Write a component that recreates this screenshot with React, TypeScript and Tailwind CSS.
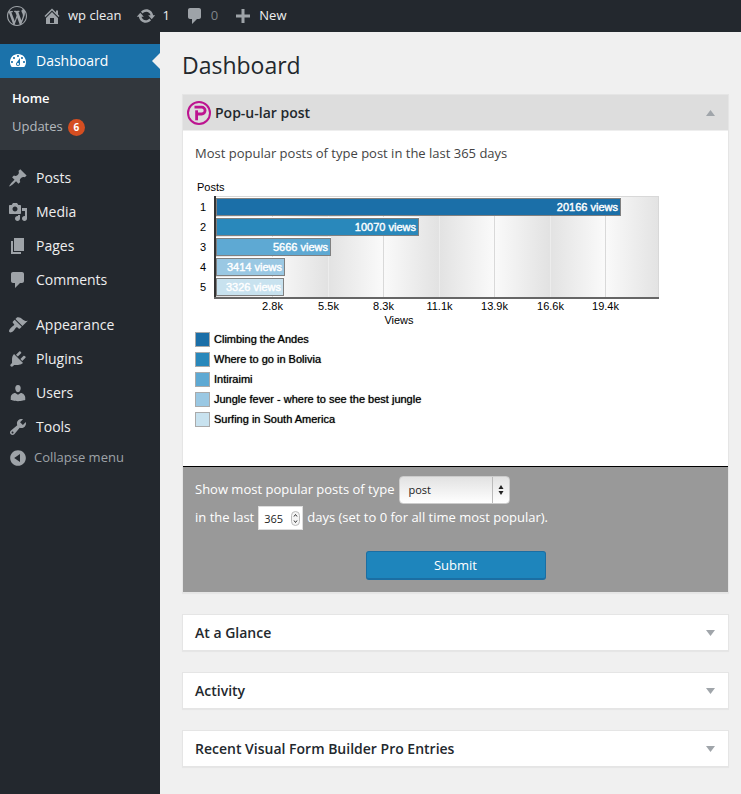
import { useState } from 'react';
import type { ReactNode } from 'react';
import clsx from 'clsx';

const ICONS = {
  wordpress:
    'M20 10c0-5.51-4.49-10-10-10C4.48 0 0 4.49 0 10c0 5.52 4.48 10 10 10 5.51 0 10-4.48 10-10zM7.78 15.37L4.37 6.22c.55-.02 1.17-.08 1.17-.08.5-.06.44-1.13-.06-1.11 0 0-1.45.11-2.37.11-.18 0-.37 0-.58-.01C4.12 2.69 6.87 1.11 10 1.11c2.33 0 4.45.87 6.05 2.34-.68-.11-1.65.39-1.65 1.58 0 .74.45 1.36.9 2.1.35.61.55 1.36.55 2.46 0 1.49-1.4 5-1.4 5l-3.03-8.37c.54-.02.82-.17.82-.17.5-.05.44-1.25-.06-1.22 0 0-1.44.12-2.38.12-.87 0-2.33-.12-2.33-.12-.5-.03-.56 1.2-.06 1.22l.92.08 1.26 3.41zM17.41 10c.24-.64.74-1.87.43-4.25.7 1.29 1.05 2.71 1.05 4.25 0 3.29-1.73 6.24-4.4 7.78.97-2.59 1.94-5.2 2.92-7.78zM6.1 18.09C3.12 16.65 1.11 13.53 1.11 10c0-1.3.23-2.48.72-3.59C3.25 10.3 4.67 14.2 6.1 18.09zm4.03-6.63l2.58 6.98c-.86.29-1.76.45-2.71.45-.79 0-1.57-.11-2.29-.33.81-2.38 1.62-4.74 2.42-7.1z',
  home: 'M16 8.5l1.53 1.53-1.06 1.06L10 4.6l-6.47 6.5-1.06-1.07L10 2.5l4 4v-2h2v4zm-6-2.46l6 5.99V18H4v-5.97zM12 17v-5H8v5h4z',
  update:
    'M10.2 3.28c3.53 0 6.43 2.61 6.92 6h2.08l-3.5 4-3.5-4h2.32c-.45-1.97-2.21-3.45-4.32-3.45-1.45 0-2.73.71-3.54 1.78L4.95 5.66C6.23 4.2 8.11 3.28 10.2 3.28zm-.4 13.44c-3.52 0-6.43-2.61-6.92-6H.8l3.5-4c1.17 1.33 2.33 2.67 3.5 4H5.48c.45 1.97 2.21 3.45 4.32 3.45 1.45 0 2.73-.71 3.54-1.78l1.71 1.95c-1.28 1.46-3.15 2.38-5.25 2.38z',
  comments: 'M5 2h9c1.1 0 2 .9 2 2v7c0 1.1-.9 2-2 2h-2l-5 5v-5H5c-1.1 0-2-.9-2-2V4c0-1.1.9-2 2-2z',
  plus: 'M17 8.5v3h-5.5V17h-3v-5.5H3v-3h5.5V3h3v5.5z',
  dashboard:
    'M3.76 16h12.48c1.1-1.37 1.76-3.11 1.76-5 0-4.42-3.58-8-8-8s-8 3.58-8 8c0 1.89.66 3.63 1.76 5zM10 4c.55 0 1 .45 1 1s-.45 1-1 1-1-.45-1-1 .45-1 1-1zM6 6c.55 0 1 .45 1 1s-.45 1-1 1-1-.45-1-1 .45-1 1-1zm8 0c.55 0 1 .45 1 1s-.45 1-1 1-1-.45-1-1 .45-1 1-1zm-5.37 5.55L12 7v6c0 1.1-.9 2-2 2s-2-.9-2-2c0-.57.24-1.08.63-1.45zM4 10c.55 0 1 .45 1 1s-.45 1-1 1-1-.45-1-1 .45-1 1-1zm12 0c.55 0 1 .45 1 1s-.45 1-1 1-1-.45-1-1 .45-1 1-1zm-5 3c0-.55-.45-1-1-1s-1 .45-1 1 .45 1 1 1 1-.45 1-1z',
  post: 'M10.44 3.02l1.82-1.82 6.36 6.35-1.83 1.82c-1.05-.68-2.48-.57-3.41.36l-.75.75c-.92.93-1.04 2.35-.35 3.41l-1.83 1.82-2.41-2.41-2.8 2.79c-.42.42-3.38 2.71-3.8 2.29s1.86-3.39 2.28-3.81l2.79-2.79L4.1 9.36l1.83-1.82c1.05.69 2.48.57 3.4-.36l.75-.75c.93-.92 1.05-2.35.36-3.41z',
  media:
    'M13 11V4c0-.55-.45-1-1-1h-1.67L9 1H5L3.67 3H2c-.55 0-1 .45-1 1v7c0 .55.45 1 1 1h10c.55 0 1-.45 1-1zM7 4.5c1.38 0 2.5 1.12 2.5 2.5S8.38 9.5 7 9.5 4.5 8.38 4.5 7 5.62 4.5 7 4.5zM14 6h5v10.5c0 1.38-1.12 2.5-2.5 2.5S14 17.88 14 16.5s1.12-2.5 2.5-2.5c.17 0 .34.02.5.05V9h-3V6zm-4 8.05V13h2v3.5c0 1.38-1.12 2.5-2.5 2.5S7 17.88 7 16.5 8.12 14 9.5 14c.17 0 .34.02.5.05z',
  page: 'M6 15V2h10v13H6zm-1 1h8v2H3V5h2v11z',
  appearance:
    'M14.48 11.06L7.41 3.99l1.5-1.5c.5-.56 2.3-.47 3.51.32 1.21.8 1.43 1.28 2.91 2.1 1.18.64 2.45 1.26 4.45.85zm-.71.71L6.7 4.7 4.93 6.47c-.39.39-.39 1.02 0 1.41l1.06 1.06c.39.39.39 1.03 0 1.42-.6.6-1.43 1.11-2.21 1.69-.35.26-.7.53-1.01.84C1.43 14.23.4 16.08 1.4 17.07c.99 1 2.84-.03 4.18-1.36.31-.31.58-.66.85-1.02.57-.78 1.08-1.61 1.69-2.21.39-.39 1.02-.39 1.41 0l1.06 1.06c.39.39 1.02.39 1.41 0z',
  plugins:
    'M13.11 4.36L9.87 7.6 8 5.73l3.24-3.24c.35-.34 1.05-.2 1.56.32.52.51.66 1.21.31 1.55zm-8 1.77l.91-1.12 9.01 9.01-1.19.84c-.71.71-2.63 1.16-3.82 1.16H6.14L4.9 17.26c-.59.59-1.54.59-2.12 0-.59-.58-.59-1.53 0-2.12l1.24-1.24v-3.88c0-1.13.4-3.19 1.09-3.89zm7.26 3.97l3.24-3.24c.34-.35 1.04-.21 1.55.31.52.51.66 1.21.31 1.55l-3.24 3.25z',
  users:
    'M10 9.25c-2.27 0-2.73-3.44-2.73-3.44C7 4.02 7.82 2 9.97 2c2.16 0 2.98 2.02 2.71 3.81 0 0-.41 3.44-2.68 3.44zm0 2.57L12.72 10c2.39 0 4.52 2.33 4.52 4.53v2.49s-3.65 1.13-7.24 1.13c-3.65 0-7.24-1.13-7.24-1.13v-2.49c0-2.25 1.94-4.48 4.47-4.48z',
  tools:
    'M16.68 9.77c-1.34 1.34-3.3 1.67-4.95.99l-5.41 6.52c-.99.99-2.59.99-3.58 0s-.99-2.59 0-3.57l6.52-5.42c-.68-1.65-.35-3.61.99-4.95 1.28-1.28 3.12-1.62 4.72-1.06l-2.89 2.89 2.82 2.82 2.86-2.87c.53 1.58.18 3.39-1.08 4.65zM3.81 16.21c.4.39 1.04.39 1.43 0 .4-.4.4-1.04 0-1.43-.39-.4-1.03-.4-1.43 0-.39.39-.39 1.03 0 1.43z',
  collapse:
    'M10 2.16c4.33 0 7.84 3.51 7.84 7.84s-3.51 7.84-7.84 7.84S2.16 14.33 2.16 10 5.71 2.16 10 2.16zm2 11.72V6.12L6.18 9.97z',
};

type IconName = keyof typeof ICONS;

function Icon({ name, className }: { name: IconName; className?: string }) {
  return (
    <svg viewBox="0 0 20 20" fill="currentColor" fillRule="evenodd" aria-hidden="true" className={clsx('h-5 w-5 shrink-0', className)}>
      <path d={ICONS[name]} />
    </svg>
  );
}

const contentMenu: { label: string; icon: IconName }[] = [
  { label: 'Posts', icon: 'post' },
  { label: 'Media', icon: 'media' },
  { label: 'Pages', icon: 'page' },
  { label: 'Comments', icon: 'comments' },
];

const settingsMenu: { label: string; icon: IconName }[] = [
  { label: 'Appearance', icon: 'appearance' },
  { label: 'Plugins', icon: 'plugins' },
  { label: 'Users', icon: 'users' },
  { label: 'Tools', icon: 'tools' },
];

const posts = [
  { title: 'Climbing the Andes', views: 20166, color: '#1b6fa8' },
  { title: 'Where to go in Bolivia', views: 10070, color: '#2988bb' },
  { title: 'Intiraimi', views: 5666, color: '#5ea9d3' },
  { title: 'Jungle fever - where to see the best jungle', views: 3414, color: '#9ac8e3' },
  { title: 'Surfing in South America', views: 3326, color: '#c8e2ef' },
];

const ticks = ['2.8k', '5.5k', '8.3k', '11.1k', '13.9k', '16.6k', '19.4k'];

function AdminBar() {
  return (
    <header className="flex h-8 items-center bg-[#23282e] pl-[7px] text-[13px] text-[#eee]">
      <a href="#" aria-label="About WordPress" className="text-[#9ea3a8]">
        <Icon name="wordpress" />
      </a>
      <a href="#" className="ml-[15px] flex items-center gap-[6px]">
        <Icon name="home" className="text-[#9ea3a8]" />
        wp clean
      </a>
      <a href="#" className="ml-[15px] flex items-center gap-[6px]">
        <Icon name="update" className="text-[#9ea3a8]" />
        1
      </a>
      <a href="#" className="ml-[15px] flex items-center gap-[6px] text-[#7f8489]">
        <Icon name="comments" className="text-[#9ea3a8]" />
        0
      </a>
      <a href="#" className="ml-[15px] flex items-center gap-[6px]">
        <Icon name="plus" className="text-[#9ea3a8]" />
        New
      </a>
    </header>
  );
}

function MenuItem({ label, icon }: { label: string; icon: IconName }) {
  return (
    <li>
      <a href="#" className="flex h-[34px] items-center gap-2 pl-2 text-sm text-[#eee]">
        <Icon name={icon} className="text-[#9ea3a8]" />
        {label}
      </a>
    </li>
  );
}

function Sidebar() {
  return (
    <nav className="w-40 shrink-0 bg-[#23282e] pt-3" aria-label="Main menu">
      <a href="#" className="relative flex h-[34px] items-center gap-2 bg-[#1b72aa] pl-2 text-sm text-white">
        <Icon name="dashboard" />
        Dashboard
        <span className="absolute top-[9px] right-0 border-y-8 border-r-8 border-y-transparent border-r-[#f0f0f0]" />
      </a>
      <ul className="bg-[#32373d] pt-[7px] pb-[9px] pl-3 text-[13px]">
        <li>
          <a href="#" className="flex h-7 items-center font-semibold text-white">Home</a>
        </li>
        <li>
          <a href="#" className="flex h-7 items-center gap-[5px] text-[#b4b9be]">
            Updates
            <span className="flex h-[17px] w-[17px] items-center justify-center rounded-full bg-[#d54e21] text-[10px] font-bold text-white">6</span>
          </a>
        </li>
      </ul>
      <ul className="mt-[11px]">
        {contentMenu.map((item) => (
          <MenuItem key={item.label} {...item} />
        ))}
      </ul>
      <ul className="mt-[11px]">
        {settingsMenu.map((item) => (
          <MenuItem key={item.label} {...item} />
        ))}
      </ul>
      <button type="button" className="flex h-7 items-center gap-[6px] pl-2 text-[13px] text-[#9ea3a8]">
        <Icon name="collapse" />
        Collapse menu
      </button>
    </nav>
  );
}

function PopularLogo() {
  return (
    <svg viewBox="0 0 24 24" fill="none" stroke="#bd1490" aria-hidden="true" className="h-6 w-6 shrink-0">
      <circle cx="12" cy="12" r="11" strokeWidth="2" />
      <path d="M7.5 6.2h7.2a3.3 3.3 0 0 1 0 6.8h-4.2" strokeWidth="2.8" />
      <path d="M9.6 9.3v10" strokeWidth="2.8" />
    </svg>
  );
}

function Panel({ title, logo, open, children }: { title: string; logo?: ReactNode; open?: boolean; children?: ReactNode }) {
  return (
    <section className="border border-[#e5e5e5] bg-white shadow-[0_1px_1px_rgba(0,0,0,0.04)]">
      <div className={clsx('flex h-[35px] items-center pr-[13px]', logo ? 'gap-1 bg-[#ddd] pl-1' : 'pl-3')}>
        {logo}
        <h2 className="text-sm font-semibold text-[#23282d]">{title}</h2>
        <button type="button" aria-label={`Toggle panel: ${title}`} className="ml-auto text-[#a0a5aa]">
          <svg viewBox="0 0 9 6" fill="currentColor" className={clsx('h-[6px] w-[9px]', open && 'rotate-180')}>
            <path d="M0 0h9L4.5 6z" />
          </svg>
        </button>
      </div>
      {children}
    </section>
  );
}

function ViewsChart() {
  return (
    <svg viewBox="0 0 465 150" role="img" aria-label="Post views" className="mt-4 block h-auto w-[465px] max-w-full font-['Liberation_Sans',Arial,sans-serif] text-[11px]">
      <defs>
        <linearGradient id="plot" gradientUnits="userSpaceOnUse" x1="77" x2="188" spreadMethod="repeat">
          <stop offset="0" stopColor="#fafafa" />
          <stop offset="0.5" stopColor="#e2e2e2" />
          <stop offset="1" stopColor="#fafafa" />
        </linearGradient>
      </defs>
      <text x="2" y="12">Posts</text>
      <rect x="21.5" y="17.5" width="442" height="101" fill="url(#plot)" stroke="#d8d8d8" />
      {ticks.map((tick, i) => {
        const x = 77.5 + Math.round(i * 55.5);
        return (
          <g key={tick}>
            <path d={`M${x} 18v100`} stroke={i % 2 ? '#ececec' : '#d9d9d9'} />
            <text x={x} y="131" textAnchor="middle">{tick}</text>
          </g>
        );
      })}
      {posts.map((post, i) => {
        const width = Math.round(post.views / 49.9);
        return (
          <g key={post.title}>
            <text x="5" y={32 + i * 20}>{i + 1}</text>
            <path d={`M21 ${18.5 + i * 20}h${width + 1}`} stroke="#fff" />
            <rect x="21.5" y={19.5 + i * 20} width={width} height="17" fill={post.color} stroke="#808080" />
            <text x={19 + width} y={32 + i * 20} textAnchor="end" fill="#fff" stroke="#fff" strokeWidth="0.4">
              {post.views} views
            </text>
          </g>
        );
      })}
      <path d="M20 17v103" stroke="#333" strokeWidth="2" />
      <path d="M19 119h445" stroke="#666" strokeWidth="2" />
      <text x="204" y="145" textAnchor="middle">Views</text>
    </svg>
  );
}

function PopularPostForm() {
  const [postType, setPostType] = useState('post');
  const [days, setDays] = useState('365');

  return (
    <form className="border-t border-black bg-[#999] px-3 pt-[9px] pb-3 text-[13px] text-white" onSubmit={(e) => e.preventDefault()}>
      <div className="flex h-7 items-center gap-[5px]">
        <label htmlFor="post-type">Show most popular posts of type</label>
        <div className="relative">
          <select
            id="post-type"
            value={postType}
            onChange={(e) => setPostType(e.target.value)}
            className="block h-7 w-[111px] appearance-none rounded-[4px] border border-[#ccc] bg-linear-to-b from-[#e2e2e2] to-white pl-2 text-[11px] text-[#222]"
          >
            <option value="post">post</option>
            <option value="page">page</option>
          </select>
          <span className="pointer-events-none absolute inset-y-px right-px flex w-[17px] items-center justify-center border-l border-[#bbb]">
            <svg viewBox="0 0 6 10" fill="#222" className="h-[10px] w-[6px]">
              <path d="M3 0l2.5 4h-5zM3 10L.5 6h5z" />
            </svg>
          </span>
        </div>
      </div>
      <div className="mt-[2px] flex h-6 items-center gap-1">
        <label htmlFor="days">in the last</label>
        <div className="relative">
          <input
            id="days"
            type="number"
            value={days}
            onChange={(e) => setDays(e.target.value)}
            className="block h-6 w-[45px] appearance-none border border-[#ddd] bg-white pl-[5px] text-[11px] text-[#222] [appearance:textfield]"
          />
          <svg viewBox="0 0 9 15" fill="none" stroke="#333" className="pointer-events-none absolute top-[5px] right-[3px] h-[15px] w-[9px]">
            <rect x="0.5" y="0.5" width="8" height="14" rx="4" fill="#f4f4f4" stroke="#bbb" />
            <path d="M3 5.5L4.5 3.5 6 5.5M3 9.5l1.5 2 1.5-2" />
          </svg>
        </div>
        <span>days (set to 0 for all time most popular).</span>
      </div>
      <button
        type="submit"
        className="mx-auto mt-[21px] block h-[29px] w-[180px] rounded-[3px] border border-b-2 border-[#1b6ea3] bg-[#1e85bc] text-[13px] leading-none font-medium text-white"
      >
        Submit
      </button>
    </form>
  );
}

export default function App() {
  return (
    <div className="flex min-h-screen flex-col bg-[#f0f0f0] font-['Open_Sans',sans-serif] text-[#444]">
      <AdminBar />
      <div className="flex flex-1">
        <Sidebar />
        <main className="min-w-0 flex-1 pt-[18px] pr-3 pb-6 pl-[22px]">
          <h1 className="text-[23px] leading-[30px] text-[#23282d]">Dashboard</h1>
          <div className="mt-[14px] flex flex-col gap-[21px]">
            <Panel title="Pop-u-lar post" logo={<PopularLogo />} open>
              <div className="border-t border-[#eee] px-3 pt-3 pb-[37px]">
                <p className="text-[13px] leading-5">Most popular posts of type post in the last 365 days</p>
                <ViewsChart />
                <ul className="font-['Liberation_Sans',Arial,sans-serif] text-[11px] text-black">
                  {posts.map((post) => (
                    <li key={post.title} className="flex h-5 items-center gap-1 [text-shadow:0_0_1px_#000b]">
                      <span className="h-[15px] w-[15px] border border-[#aaa]" style={{ backgroundColor: post.color }} />
                      {post.title}
                    </li>
                  ))}
                </ul>
              </div>
              <PopularPostForm />
            </Panel>
            <Panel title="At a Glance" />
            <Panel title="Activity" />
            <Panel title="Recent Visual Form Builder Pro Entries" />
          </div>
        </main>
      </div>
    </div>
  );
}
